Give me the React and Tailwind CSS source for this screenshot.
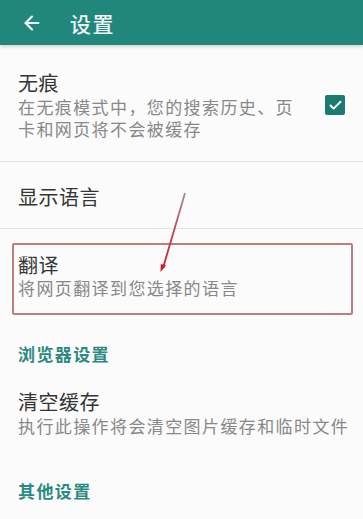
import { ArrowLeft, Check } from 'lucide-react';

// Settings screen (browser) with a red annotation box + arrow on the translate row.

const FONT = { fontFamily: '"Noto Sans CJK SC", "Noto Sans", sans-serif' };

function Title({ children }) {
  return (
    <div className="text-[20px] leading-[26px] tracking-[0.5px] text-[#353535]">{children}</div>
  );
}

function Sub({ children }) {
  return (
    <div className="text-[17px] leading-[22px] tracking-[1.4px] text-[#888888]">{children}</div>
  );
}

function SectionLabel({ children }) {
  return (
    <div className="px-[18px] text-[17px] leading-[22px] tracking-[1.4px] font-bold text-[#2b8a80]">
      {children}
    </div>
  );
}

export default function App() {
  return (
    <div className="relative w-[363px] h-[519px] overflow-hidden bg-[#fbfbfb]" style={FONT}>
      {/* ── App bar ── */}
      <div className="h-[45px] bg-[#21877d] flex items-center shadow-[0_2px_3px_rgba(0,0,0,0.15)]">
        <ArrowLeft className="ml-[21px] w-[22px] h-[22px] text-[#eef5f4]" strokeWidth={2.4} />
        <div className="ml-[27px] text-[21px] leading-[26px] tracking-[1.5px] font-medium text-[#eef5f4]">
          设置
        </div>
      </div>

      {/* ── 无痕 ── */}
      <div className="flex items-center pl-[18px] pr-[18px] pt-[25px] pb-[21px]">
        <div className="w-[285px]">
          <Title>无痕</Title>
          <Sub>在无痕模式中，您的搜索历史、页卡和网页将不会被缓存</Sub>
        </div>
        <div className="ml-auto w-[20px] h-[20px] rounded-[2px] bg-[#1c7b70] flex items-center justify-center">
          <Check className="w-[15px] h-[15px] text-white" strokeWidth={3} />
        </div>
      </div>
      <div className="h-px bg-[#e4e4e4]" />

      {/* ── 显示语言 ── */}
      <div className="h-[66px] flex items-center pl-[18px] pt-[4px]">
        <Title>显示语言</Title>
      </div>
      <div className="h-px bg-[#e4e4e4]" />

      {/* ── 翻译 (highlighted) ── */}
      <div className="mt-[14px] ml-[12px] mr-[10px] h-[72px] border-2 border-[#bb7e80] rounded-[2px] pl-[4px] pt-[8px]">
        <div className="text-[20px] leading-[24px] tracking-[0.5px] text-[#353535]">翻译</div>
        <Sub>将网页翻译到您选择的语言</Sub>
      </div>

      {/* ── 浏览器设置 ── */}
      <div className="mt-[28px]">
        <SectionLabel>浏览器设置</SectionLabel>
      </div>
      <div className="mt-[24px] pl-[18px]">
        <Title>清空缓存</Title>
        <Sub>执行此操作将会清空图片缓存和临时文件</Sub>
      </div>

      {/* ── 其他设置 ── */}
      <div className="mt-[43px]">
        <SectionLabel>其他设置</SectionLabel>
      </div>

      {/* annotation arrow */}
      <svg className="absolute left-0 top-0 pointer-events-none" width="363" height="519">
        <defs>
          <linearGradient id="arw" x1="185" y1="193" x2="162" y2="271" gradientUnits="userSpaceOnUse">
            <stop offset="0" stopColor="#a09098" />
            <stop offset="0.45" stopColor="#c04858" />
            <stop offset="1" stopColor="#d01828" />
          </linearGradient>
        </defs>
        <line x1="185" y1="193" x2="163" y2="268" stroke="url(#arw)" strokeWidth="1.8" />
        <path d="M160.5 272 L160.8 264 L166 265.6 Z" fill="#d01828" />
      </svg>
    </div>
  );
}
